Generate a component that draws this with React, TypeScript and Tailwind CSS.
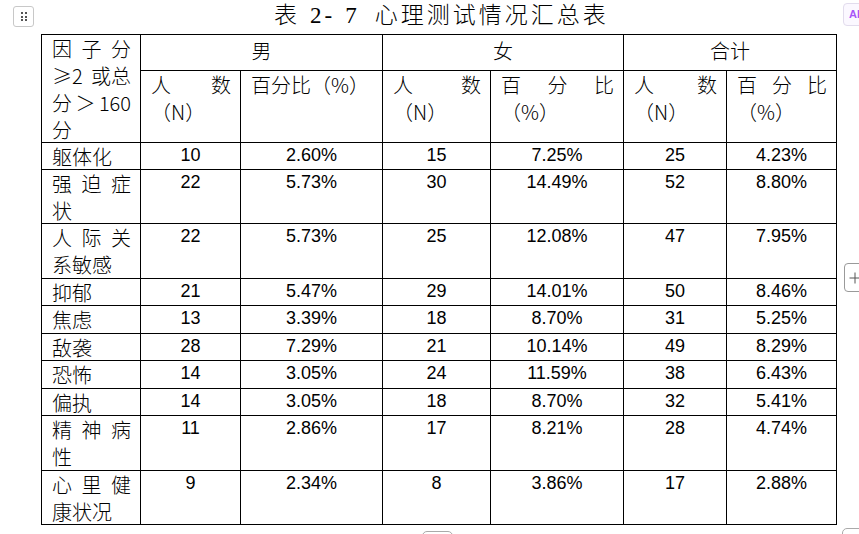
import React from "react";

type Row = { name: string[]; rest?: string; vals: string[] };

const rows: Row[] = [
  { name: ["躯体化"], vals: ["10", "2.60%", "15", "7.25%", "25", "4.23%"] },
  { name: ["强", "迫", "症"], rest: "状", vals: ["22", "5.73%", "30", "14.49%", "52", "8.80%"] },
  { name: ["人", "际", "关"], rest: "系敏感", vals: ["22", "5.73%", "25", "12.08%", "47", "7.95%"] },
  { name: ["抑郁"], vals: ["21", "5.47%", "29", "14.01%", "50", "8.46%"] },
  { name: ["焦虑"], vals: ["13", "3.39%", "18", "8.70%", "31", "5.25%"] },
  { name: ["敌袭"], vals: ["28", "7.29%", "21", "10.14%", "49", "8.29%"] },
  { name: ["恐怖"], vals: ["14", "3.05%", "24", "11.59%", "38", "6.43%"] },
  { name: ["偏执"], vals: ["14", "3.05%", "18", "8.70%", "32", "5.41%"] },
  { name: ["精", "神", "病"], rest: "性", vals: ["11", "2.86%", "17", "8.21%", "28", "4.74%"] },
  { name: ["心", "里", "健"], rest: "康状况", vals: ["9", "2.34%", "8", "3.86%", "17", "2.88%"] },
];

const cjk = "font-['Noto_Sans_CJK_SC',sans-serif] font-light text-[20px] leading-[27px]";
const num = "font-['Liberation_Sans',sans-serif] text-[18px] leading-[25px] text-center";
const cell = "border-r border-b border-black";

function Spread({ parts }: { parts: string[] }) {
  return (
    <div className="flex justify-between">
      {parts.map((p, i) => (
        <span key={i}>{p}</span>
      ))}
    </div>
  );
}

function CountHead() {
  return (
    <div className={`${cell} ${cjk} pl-[10px] pr-[9px]`}>
      <Spread parts={["人", "数"]} />
      <div>（N）</div>
    </div>
  );
}

function PercentHead() {
  return (
    <div className={`${cell} ${cjk} pl-[10px] pr-[9px]`}>
      <Spread parts={["百", "分", "比"]} />
      <div>（%）</div>
    </div>
  );
}

export default function App() {
  return (
    <div className="relative w-[859px] h-[534px] overflow-hidden bg-white text-black">
      <div className="ml-[41px] w-[796px] pt-[1px]">
        <h1 className="h-[30px] pl-[233px] leading-[30px] whitespace-nowrap text-[23px] tracking-[3px] font-light font-['Liberation_Serif','Noto_Sans_CJK_SC',serif]">
          <span>表</span>
          <span className="ml-[10px]">2-</span>
          <span className="ml-[10px]">7</span>
          <span className="ml-[15px]">心理测试情况汇总表</span>
        </h1>

        <div className="mt-[3px] grid grid-cols-[99px_100px_142px_108px_133px_103px_110px] grid-rows-[36px_72px_27px_54px_55px_27px_28px_27px_28px_27px_55px_54px] border-l border-t border-black">
          <div className={`${cell} ${cjk} row-span-2 pl-[10px] pr-[9px]`}>
            <Spread parts={["因", "子", "分"]} />
            <Spread parts={["≥2", "或总"]} />
            <Spread parts={["分", "＞", "160"]} />
            <div>分</div>
          </div>
          <div className={`${cell} ${cjk} col-span-2 text-center pt-[2px]`}>男</div>
          <div className={`${cell} ${cjk} col-span-2 text-center pt-[2px]`}>女</div>
          <div className={`${cell} ${cjk} col-span-2 text-center pt-[2px]`}>合计</div>

          <CountHead />
          <div className={`${cell} ${cjk} pl-[10px] pr-[9px] whitespace-nowrap`}>百分比（%）</div>
          <CountHead />
          <PercentHead />
          <CountHead />
          <PercentHead />

          {rows.map((r, i) => (
            <React.Fragment key={i}>
              <div className={`${cell} ${cjk} pl-[10px] pr-[9px]`}>
                {r.rest ? (
                  <>
                    <Spread parts={r.name} />
                    <div>{r.rest}</div>
                  </>
                ) : (
                  <div>{r.name[0]}</div>
                )}
              </div>
              {r.vals.map((v, j) => (
                <div key={j} className={`${cell} ${num}`}>
                  {v}
                </div>
              ))}
            </React.Fragment>
          ))}
        </div>
      </div>

      {/* editor widgets over the page */}
      <button className="absolute left-[13px] top-[6px] w-[21px] h-[21px] rounded-[3px] border border-[#c8c8c8] bg-white flex items-center justify-center">
        <span className="grid grid-cols-2 gap-x-[2px] gap-y-[1.5px]">
          {[0, 1, 2, 3, 4, 5].map((d) => (
            <span key={d} className="block w-[2px] h-[2px] bg-[#555]" />
          ))}
        </span>
      </button>

      <button className="absolute left-[843px] top-[3px] w-[30px] h-[23px] rounded-[4px] border border-[#e2dced] bg-[#fbf8ff] pl-[5px] text-left text-[11px] font-bold leading-[21px] text-[#a855f7] font-['Liberation_Sans',sans-serif]">
        AI
      </button>

      <button className="absolute left-[844px] top-[263px] w-[26px] h-[29px] rounded-[4px] border border-[#9a9a9a] bg-white">
        <svg width="12" height="12" viewBox="0 0 12 12" className="absolute left-[4px] top-[8px]">
          <path d="M6 0.5V11.5M0.5 6H11.5" stroke="#555" strokeWidth="1" />
        </svg>
      </button>

      <div className="absolute left-[422px] top-[531px] w-[31px] h-[20px] rounded-[5px] border border-[#aaa] bg-white" />
      <div className="absolute left-[842px] top-[528px] w-[30px] h-[20px] rounded-[5px] border border-[#aaa] bg-white" />
    </div>
  );
}
